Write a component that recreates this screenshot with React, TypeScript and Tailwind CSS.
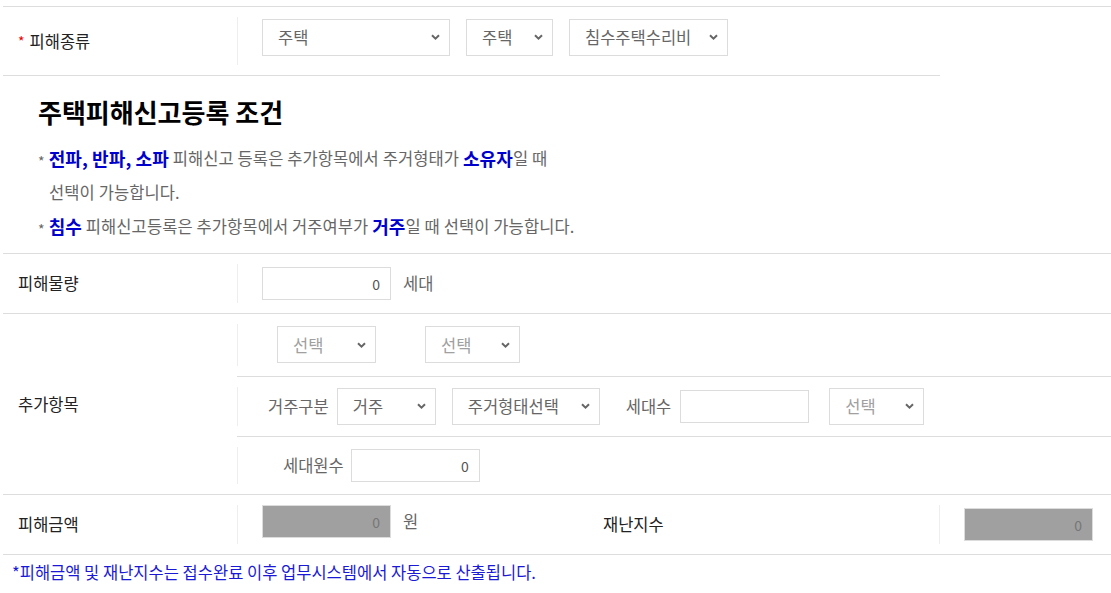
import React from "react";

type SelectBoxProps = {
  value: string;
  width: string;
  muted?: boolean;
};

function Chevron() {
  return (
    <svg width="9" height="6" viewBox="0 0 9 6" className="shrink-0">
      <path d="M1 1.2 L4.5 4.6 L8 1.2" fill="none" stroke="#666" strokeWidth="2" />
    </svg>
  );
}

function SelectBox({ value, width, muted }: SelectBoxProps) {
  return (
    <div
      className={`${width} h-[37px] flex items-center justify-between border border-[#dcdcdc] bg-white pl-[15px] pr-[9px] text-[16.5px] ${
        muted ? "text-[#a0a0a0]" : "text-[#666]"
      }`}
    >
      <span>{value}</span>
      <Chevron />
    </div>
  );
}

function NumBox({ value, width, disabled }: { value: string; width: string; disabled?: boolean }) {
  return (
    <div
      className={`${width} h-[33px] flex items-center justify-end border border-[#dcdcdc] pr-[10px] text-[14px] ${
        disabled ? "bg-[#a0a0a0] text-[#777]" : "bg-white text-[#555]"
      }`}
    >
      {value}
    </div>
  );
}

function Sep() {
  return <div className="w-px self-stretch my-[10px] bg-[#eeeeee]" />;
}

export default function App() {
  return (
    <div className="w-[1111px] h-[593px] bg-white pt-[6px] pl-[3px] font-['Noto_Sans_CJK_KR','Malgun_Gothic',sans-serif] text-[16.5px] text-[#222] leading-none">
      {/* 피해종류 */}
      <div className="flex h-[69px] border-t border-[#dddddd]">
        <div className="w-[234px] flex items-center pl-[15px]">
          <span className="text-[#e00] mr-[5px] text-[14px]">*</span>
          <span>피해종류</span>
        </div>
        <Sep />
        <div className="flex items-center pl-[24px] -mt-[8px] gap-[16px]">
          <SelectBox value="주택" width="w-[188px]" />
          <SelectBox value="주택" width="w-[87px]" />
          <SelectBox value="침수주택수리비" width="w-[159px]" />
        </div>
      </div>
      <div className="w-[937px] h-px bg-[#dddddd]" />

      {/* 조건 안내 */}
      <div className="h-[177px] pl-[35px] pt-[20px]">
        <h2 className="h-[32px] text-[26px] font-bold leading-[32px] text-black">주택피해신고등록 조건</h2>
        <div className="mt-[13px] text-[16.5px] text-[#666] leading-[34px] tracking-[0.1px]">
          <p className="h-[34px] flex items-center whitespace-pre">
            <span className="text-[14px] mr-[4px] self-start mt-[3px]">*</span>
            <b className="text-[#0000cc] text-[18px]">전파, 반파, 소파</b>
            <span> 피해신고 등록은 추가항목에서 주거형태가 </span>
            <b className="text-[#0000cc] text-[18px]">소유자</b>
            <span>일 때</span>
          </p>
          <p className="h-[34px] flex items-center pl-[11px]">선택이 가능합니다.</p>
          <p className="h-[34px] flex items-center whitespace-pre">
            <span className="text-[14px] mr-[4px] self-start mt-[3px]">*</span>
            <b className="text-[#0000cc] text-[18px]">침수</b>
            <span> 피해신고등록은 추가항목에서 거주여부가 </span>
            <b className="text-[#0000cc] text-[18px]">거주</b>
            <span>일 때 선택이 가능합니다.</span>
          </p>
        </div>
      </div>

      {/* 피해물량 */}
      <div className="flex h-[60px] border-t border-[#dddddd]">
        <div className="w-[234px] flex items-center pl-[15px]">피해물량</div>
        <Sep />
        <div className="flex items-center pl-[24px] gap-[12px]">
          <NumBox value="0" width="w-[129px]" />
          <span className="text-[#666]">세대</span>
        </div>
      </div>

      {/* 추가항목 */}
      <div className="flex h-[181px] border-t border-[#dddddd]">
        <div className="w-[234px] flex items-center pl-[15px]">추가항목</div>
        <div className="flex-1 flex flex-col">
          <div className="flex h-[62px]">
            <Sep />
            <div className="flex items-center pl-[39px] gap-[49px]">
              <SelectBox value="선택" width="w-[99px]" muted />
              <SelectBox value="선택" width="w-[95px]" muted />
            </div>
          </div>
          <div className="flex h-[61px] border-t border-[#dddddd]">
            <Sep />
            <div className="flex items-center pl-[30px] text-[#666]">
              <span className="mr-[8px]">거주구분</span>
              <SelectBox value="거주" width="w-[99px]" />
              <div className="w-[16px]" />
              <SelectBox value="주거형태선택" width="w-[148px]" />
              <span className="ml-[26px] mr-[9px]">세대수</span>
              <div className="w-[129px] h-[33px] border border-[#dcdcdc] bg-white" />
              <div className="w-[20px]" />
              <SelectBox value="선택" width="w-[95px]" muted />
            </div>
          </div>
          <div className="flex h-[58px] border-t border-[#dddddd]">
            <Sep />
            <div className="flex items-center pl-[45px] text-[#666]">
              <span className="mr-[7px]">세대원수</span>
              <NumBox value="0" width="w-[129px]" />
            </div>
          </div>
        </div>
      </div>

      {/* 피해금액 / 재난지수 */}
      <div className="flex h-[61px] border-t border-b border-[#dddddd]">
        <div className="w-[234px] flex items-center pl-[15px]">피해금액</div>
        <Sep />
        <div className="w-[350px] flex items-center pl-[24px] gap-[12px] -mt-[6px]">
          <NumBox value="0" width="w-[129px]" disabled />
          <span className="text-[#666]">원</span>
        </div>
        <div className="w-[351px] flex items-center pl-[15px]">재난지수</div>
        <Sep />
        <div className="flex items-center pl-[24px]">
          <NumBox value="0" width="w-[129px]" disabled />
        </div>
      </div>

      <p className="mt-[7px] pl-[9px] text-[16.5px] leading-[20px] text-[#1a1ad6]">
        *피해금액 및 재난지수는 접수완료 이후 업무시스템에서 자동으로 산출됩니다.
      </p>
    </div>
  );
}
